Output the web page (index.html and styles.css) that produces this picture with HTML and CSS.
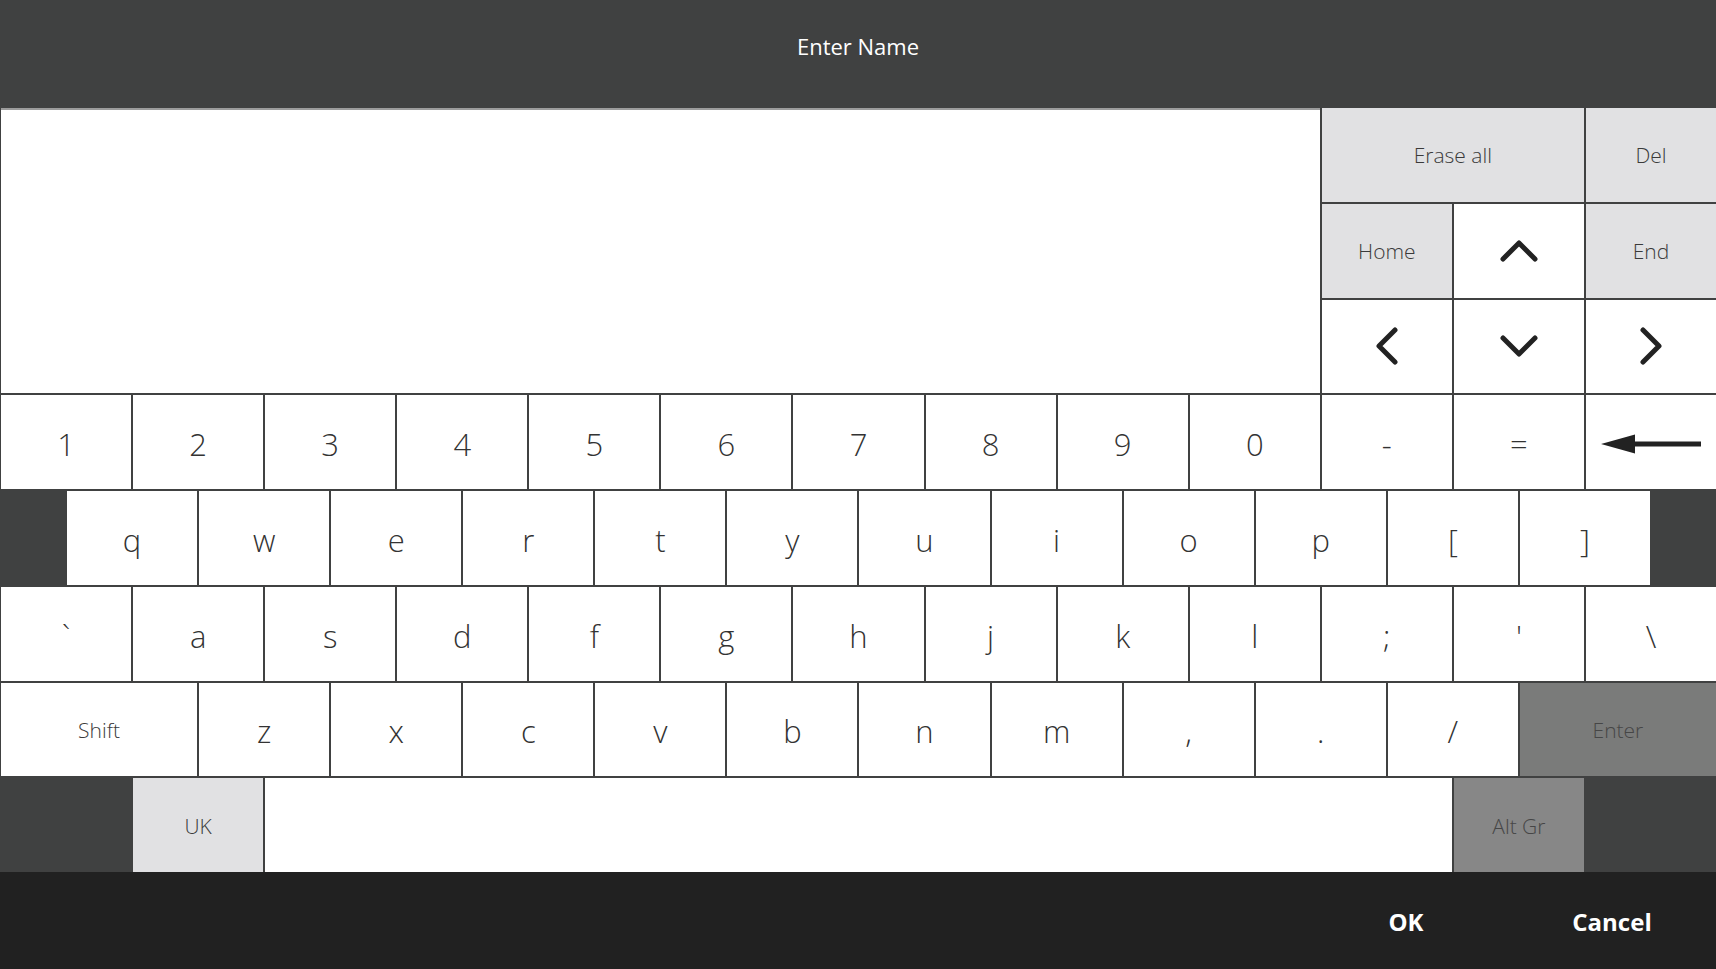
FILE: index.html
```html
<!DOCTYPE html>
<html>
<head>
<meta charset="utf-8">
<title>Enter Name</title>
<link rel="stylesheet" href="styles.css">
</head>
<body>
<div class="screen">
  <header class="title-bar">Enter Name</header>
  <main class="keyboard">
    <div class="input-area"></div>
    <div class="key gray w4 label">Erase all</div>
    <div class="key gray label">Del</div>
    <div class="key gray label">Home</div>
    <div class="key icon"><svg width="38" height="24" viewBox="0 0 38 24"><polyline points="3,20 19,4 35,20" fill="none" stroke="#222" stroke-width="5" stroke-linecap="round" stroke-linejoin="round"/></svg></div>
    <div class="key gray label">End</div>
    <div class="key icon"><svg width="24" height="38" viewBox="0 0 24 38"><polyline points="20,3 4,19 20,35" fill="none" stroke="#222" stroke-width="5" stroke-linecap="round" stroke-linejoin="round"/></svg></div>
    <div class="key icon"><svg width="38" height="24" viewBox="0 0 38 24"><polyline points="3,4 19,20 35,4" fill="none" stroke="#222" stroke-width="5" stroke-linecap="round" stroke-linejoin="round"/></svg></div>
    <div class="key icon"><svg width="24" height="38" viewBox="0 0 24 38"><polyline points="4,3 20,19 4,35" fill="none" stroke="#222" stroke-width="5" stroke-linecap="round" stroke-linejoin="round"/></svg></div>

    <div class="key">1</div><div class="key">2</div><div class="key">3</div><div class="key">4</div><div class="key">5</div><div class="key">6</div><div class="key">7</div><div class="key">8</div><div class="key">9</div><div class="key">0</div><div class="key">-</div><div class="key">=</div>
    <div class="key icon back"><svg width="100" height="20" viewBox="0 0 100 20"><polygon points="0,10 34,0.5 34,19.5" fill="#222"/><rect x="30" y="7.5" width="70" height="5" fill="#222"/></svg></div>

    <div class="blank"></div>
    <div class="key">q</div><div class="key">w</div><div class="key">e</div><div class="key">r</div><div class="key">t</div><div class="key">y</div><div class="key">u</div><div class="key">i</div><div class="key">o</div><div class="key">p</div><div class="key">[</div><div class="key">]</div>
    <div class="blank"></div>

    <div class="key">`</div><div class="key">a</div><div class="key">s</div><div class="key">d</div><div class="key">f</div><div class="key">g</div><div class="key">h</div><div class="key">j</div><div class="key">k</div><div class="key">l</div><div class="key">;</div><div class="key">'</div><div class="key">\</div>

    <div class="key w3 label">Shift</div>
    <div class="key">z</div><div class="key">x</div><div class="key">c</div><div class="key">v</div><div class="key">b</div><div class="key">n</div><div class="key">m</div><div class="key">,</div><div class="key">.</div><div class="key">/</div>
    <div class="key w3 label enter">Enter</div>

    <div class="blank w2"></div>
    <div class="key gray label">UK</div>
    <div class="key space"></div>
    <div class="key label altgr">Alt Gr</div>
    <div class="blank w2"></div>
  </main>
  <footer class="footer">
    <div class="action">OK</div>
    <div class="action">Cancel</div>
  </footer>
</div>
</body>
</html>
```
FILE: styles.css
```css
html, body {
  margin: 0;
  padding: 0;
  width: 1716px;
  height: 969px;
  overflow: hidden;
  background: #404141;
  font-family: "Open Sans", "Noto Sans", sans-serif;
}

.screen {
  display: flex;
  flex-direction: column;
  width: 1716px;
  height: 969px;
}

.title-bar {
  height: 108px;
  flex: none;
  display: flex;
  align-items: center;
  justify-content: center;
  color: #ffffff;
  font-size: 22px;
  font-weight: 500;
  padding-bottom: 16px;
  box-sizing: border-box;
  background: #404141;
}

.keyboard {
  flex: none;
  height: 764px;
  display: grid;
  grid-template-columns: repeat(26, 1fr);
  grid-template-rows: repeat(8, 1fr);
  gap: 2px;
  padding-left: 1px;
  box-sizing: border-box;
  background: #404141;
}

.input-area {
  grid-column: span 20;
  grid-row: span 3;
  background: #ffffff;
  border-top: 2px solid #9c9c9c;
}

.key {
  grid-column: span 2;
  background: #ffffff;
  display: flex;
  align-items: center;
  justify-content: center;
  color: #333333;
  font-size: 31px;
  font-weight: 300;
  padding-top: 5px;
  box-sizing: border-box;
  line-height: 1;
}

.key.label {
  font-size: 21px;
  color: #3a3a3a;
  padding-top: 2px;
}

.key.icon {
  padding-top: 0;
}

.key.back {
  padding-top: 4px;
}

.key.gray {
  background: #e1e1e3;
}

.key.w3 { grid-column: span 3; }
.key.w4 { grid-column: span 4; }

.key.space {
  grid-column: span 18;
}

.key.enter {
  background: #7a7b7a;
  color: #464646;
}

.key.altgr {
  background: #878787;
  color: #464646;
}

.blank {
  grid-column: span 1;
}

.blank.w2 {
  grid-column: span 2;
}

.footer {
  flex: 1;
  background: #212121;
  display: flex;
  justify-content: flex-end;
  align-items: center;
  padding-right: 1px;
}

.action {
  width: 206px;
  text-align: center;
  color: #ffffff;
  font-size: 24px;
  font-weight: 700;
  padding-top: 2px;
}
```
